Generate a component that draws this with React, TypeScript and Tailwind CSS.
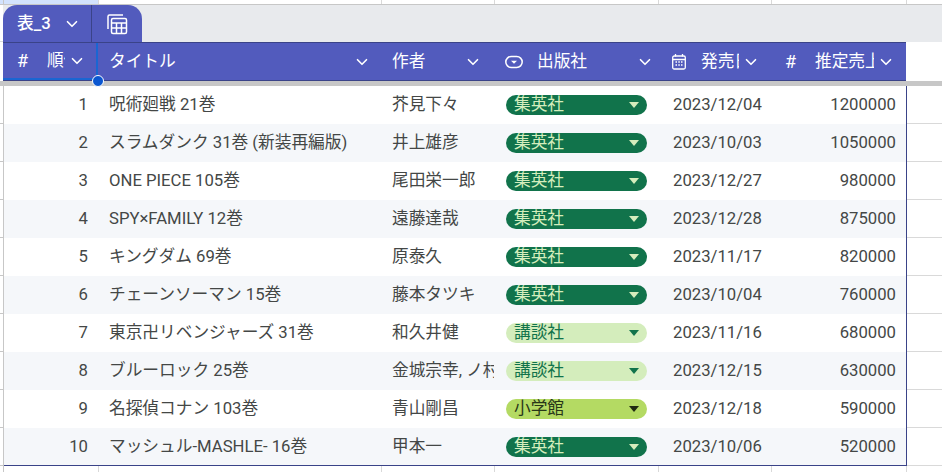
import { ChevronDown } from "lucide-react";

const font = { fontFamily: '"Roboto","Noto Sans CJK JP",sans-serif' };

type Pub = "集英社" | "講談社" | "小学館";
const chipStyle: Record<Pub, string> = {
  集英社: "bg-[#11734b] text-[#d4edbc]",
  講談社: "bg-[#d4edbc] text-[#11734b]",
  小学館: "bg-[#b4da63] text-[#283618]",
};
const caretStyle: Record<Pub, string> = {
  集英社: "border-t-[#d4edbc]",
  講談社: "border-t-[#11734b]",
  小学館: "border-t-[#1f2a10]",
};

const rows: [number, string, string, Pub, string, number][] = [
  [1, "呪術廻戦 21巻", "芥見下々", "集英社", "2023/12/04", 1200000],
  [2, "スラムダンク 31巻 (新装再編版)", "井上雄彦", "集英社", "2023/10/03", 1050000],
  [3, "ONE PIECE 105巻", "尾田栄一郎", "集英社", "2023/12/27", 980000],
  [4, "SPY×FAMILY 12巻", "遠藤達哉", "集英社", "2023/12/28", 875000],
  [5, "キングダム 69巻", "原泰久", "集英社", "2023/11/17", 820000],
  [6, "チェーンソーマン 15巻", "藤本タツキ", "集英社", "2023/10/04", 760000],
  [7, "東京卍リベンジャーズ 31巻", "和久井健", "講談社", "2023/11/16", 680000],
  [8, "ブルーロック 25巻", "金城宗幸, ノ村優介", "講談社", "2023/12/15", 630000],
  [9, "名探偵コナン 103巻", "青山剛昌", "小学館", "2023/12/18", 590000],
  [10, "マッシュル-MASHLE- 16巻", "甲本一", "集英社", "2023/10/06", 520000],
];

function GridStrip({ h, top }: { h: string; top?: boolean }) {
  return (
    <div className={`flex ${h} shrink-0 ${top ? "border-b border-[#c7c7c7]" : ""}`}>
      <div className={`w-[4px] border-r border-[#c7c7c7] ${top ? "bg-[#d3e3fd]" : ""}`} />
      <div className={`w-[95px] border-r border-[#d9d9d9] ${top ? "bg-[#d3e3fd]" : ""}`} />
      <div className="w-[283px] border-r border-[#d9d9d9]" />
      <div className="w-[113px] border-r border-[#d9d9d9]" />
      <div className="w-[164px] border-r border-[#d9d9d9]" />
      <div className="w-[113px] border-r border-[#d9d9d9]" />
      <div className="w-[135px] border-r border-[#d9d9d9]" />
    </div>
  );
}

function Chev({ className = "" }: { className?: string }) {
  return <ChevronDown size={18} strokeWidth={2.2} className={`shrink-0 text-white ${className}`} />;
}

function TableIcon() {
  return (
    <svg width="22" height="22" viewBox="0 0 22 22" fill="none" stroke="#fff" strokeWidth="1.5">
      <path d="M2 16V3.5A1.5 1.5 0 0 1 3.500 2H17" />
      <rect x="5.500" y="5.500" width="15" height="15" rx="1.500" />
      <path d="M5.500 10h15M5.500 15h15M10.500 10v10.500M15.500 10v10.500" />
    </svg>
  );
}

function DropIcon() {
  return (
    <svg width="18" height="14" viewBox="0 0 18 14" fill="none" className="shrink-0">
      <rect x="0.800" y="1.500" width="16.400" height="11" rx="5.500" stroke="#fff" strokeWidth="1.500" />
      <path d="M6 5.700h6L9 8.700z" fill="#fff" />
    </svg>
  );
}

function CalIcon() {
  return (
    <svg width="16" height="18" viewBox="0 0 16 18" fill="none" className="shrink-0">
      <rect x="1.700" y="3" width="12.600" height="13" rx="1.500" stroke="#fff" strokeWidth="1.300" />
      <path d="M1.700 6.500h12.600M4.500 1v2.500M11.500 1v2.500" stroke="#fff" strokeWidth="1.300" />
      <path d="M4.500 9h1.500M7.300 9h1.500M10 9h1.500M4.500 12h1.500M7.300 12h1.500M10 12h1.500" stroke="#fff" strokeWidth="1.300" />
    </svg>
  );
}

function HeaderCell({
  width,
  icon,
  label,
  labelW,
  iconGap,
  pl,
  className = "",
}: {
  width: string;
  icon?: React.ReactNode;
  label: string;
  labelW: string;
  iconGap: string;
  pl: string;
  className?: string;
}) {
  return (
    <div className={`relative flex h-full items-center shrink-0 ${width} ${pl} ${className}`}>
      {icon}
      <span className={`overflow-hidden whitespace-nowrap text-[16.7px] text-white ${labelW} ${iconGap}`}>{label}</span>
      <Chev />
    </div>
  );
}

export default function App() {
  return (
    <div className="flex h-[472px] w-[942px] flex-col overflow-hidden bg-white text-[16.7px] text-[#444746]" style={font}>
      <GridStrip h="h-[5px]" top />

      {/* tab strip */}
      <div className="flex h-[37px] shrink-0">
        <div className="w-[3px] shrink-0 border-b border-[#d9d9d9] bg-white" />
        <div className="flex flex-1 bg-[#e8eaed]">
          <div className="flex w-[139px] rounded-t-[14px] bg-[#525bbd]">
            <div className="flex w-[89px] items-center border-r border-[#3a4388] pl-[14px]">
              <span className="text-[16.7px] font-medium text-white">表_3</span>
              <Chev className="ml-[12px]" />
            </div>
            <div className="flex flex-1 items-center pl-[14px]">
              <TableIcon />
            </div>
          </div>
        </div>
      </div>

      {/* column header */}
      <div className="flex h-[39px] shrink-0">
        <div className="w-[3px] shrink-0" />
        <div className="flex h-full w-[903px] shrink-0 border-y border-[#3a4388] bg-[#525bbd]">
          <HeaderCell
            width="w-[95px]"
            pl="pl-[14px]"
            icon={<span className="w-[14px] shrink-0 text-[18px] leading-none text-white">#</span>}
            label="順位"
            labelW="w-[18px] mr-[3px]"
            iconGap="ml-[16px]"
            className="border-r-2 border-b-2 border-[#1a66d2]"
          />
          <HeaderCell width="w-[283px]" pl="pl-[11px]" label="タイトル" labelW="w-[244px]" iconGap="" />
          <HeaderCell width="w-[113px]" pl="pl-[11px]" label="作者" labelW="w-[72px]" iconGap="" />
          <HeaderCell
            width="w-[164px]"
            pl="pl-[11px]"
            icon={<DropIcon />}
            label="出版社"
            labelW="w-[99px]"
            iconGap="ml-[14px]"
          />
          <HeaderCell
            width="w-[113px]"
            pl="pl-[13px]"
            icon={<CalIcon />}
            label="発売日"
            labelW="w-[38px] mr-[3px]"
            iconGap="ml-[14px]"
          />
          <HeaderCell
            width="w-[135px]"
            pl="pl-[14px]"
            icon={<span className="w-[14px] shrink-0 text-[18px] leading-none text-white">#</span>}
            label="推定売上"
            labelW="w-[59px] mr-[3px]"
            iconGap="ml-[16px]"
          />
        </div>
      </div>

      {/* frozen divider */}
      <div className="relative h-[5px] shrink-0 bg-[#c7c7c7]">
        <div className="absolute left-[92px] top-[-6px] h-[12px] w-[12px] rounded-full border border-white bg-[#0b57d0]" />
      </div>

      {/* data rows */}
      {rows.map(([no, title, author, pub, date, sales], i) => (
        <div key={no} className="flex h-[38px] shrink-0">
          <div className="w-[4px] shrink-0 border-r border-b border-[#c7c7c7]" />
          <div
            className={`flex h-full w-[903px] shrink-0 items-center border-r border-[#3a4388] ${
              i % 2 ? "bg-[#f5f7fa]" : "bg-white"
            } ${i === 9 ? "border-b" : ""}`}
          >
            <div className="w-[94px] shrink-0 pr-[10px] text-right">{no}</div>
            <div className="w-[283px] shrink-0 overflow-hidden whitespace-nowrap pl-[11px]">{title}</div>
            <div className="w-[113px] shrink-0 overflow-hidden whitespace-nowrap pl-[11px]">{author}</div>
            <div className="w-[164px] shrink-0 pl-[12px]">
              <div className={`flex h-[20px] w-[141px] items-center justify-between rounded-full pl-[8px] pr-[8px] ${chipStyle[pub]}`}>
                <span>{pub}</span>
                <span className={`h-0 w-0 border-x-[5px] border-t-[6px] border-x-transparent ${caretStyle[pub]}`} />
              </div>
            </div>
            <div className="w-[113px] shrink-0 pl-[15px]">{date}</div>
            <div className="w-[135px] shrink-0 pr-[10px] text-right">{sales}</div>
          </div>
          <div className="flex-1 border-b border-[#d9d9d9]" />
        </div>
      ))}

      <GridStrip h="h-[6px]" />
    </div>
  );
}
